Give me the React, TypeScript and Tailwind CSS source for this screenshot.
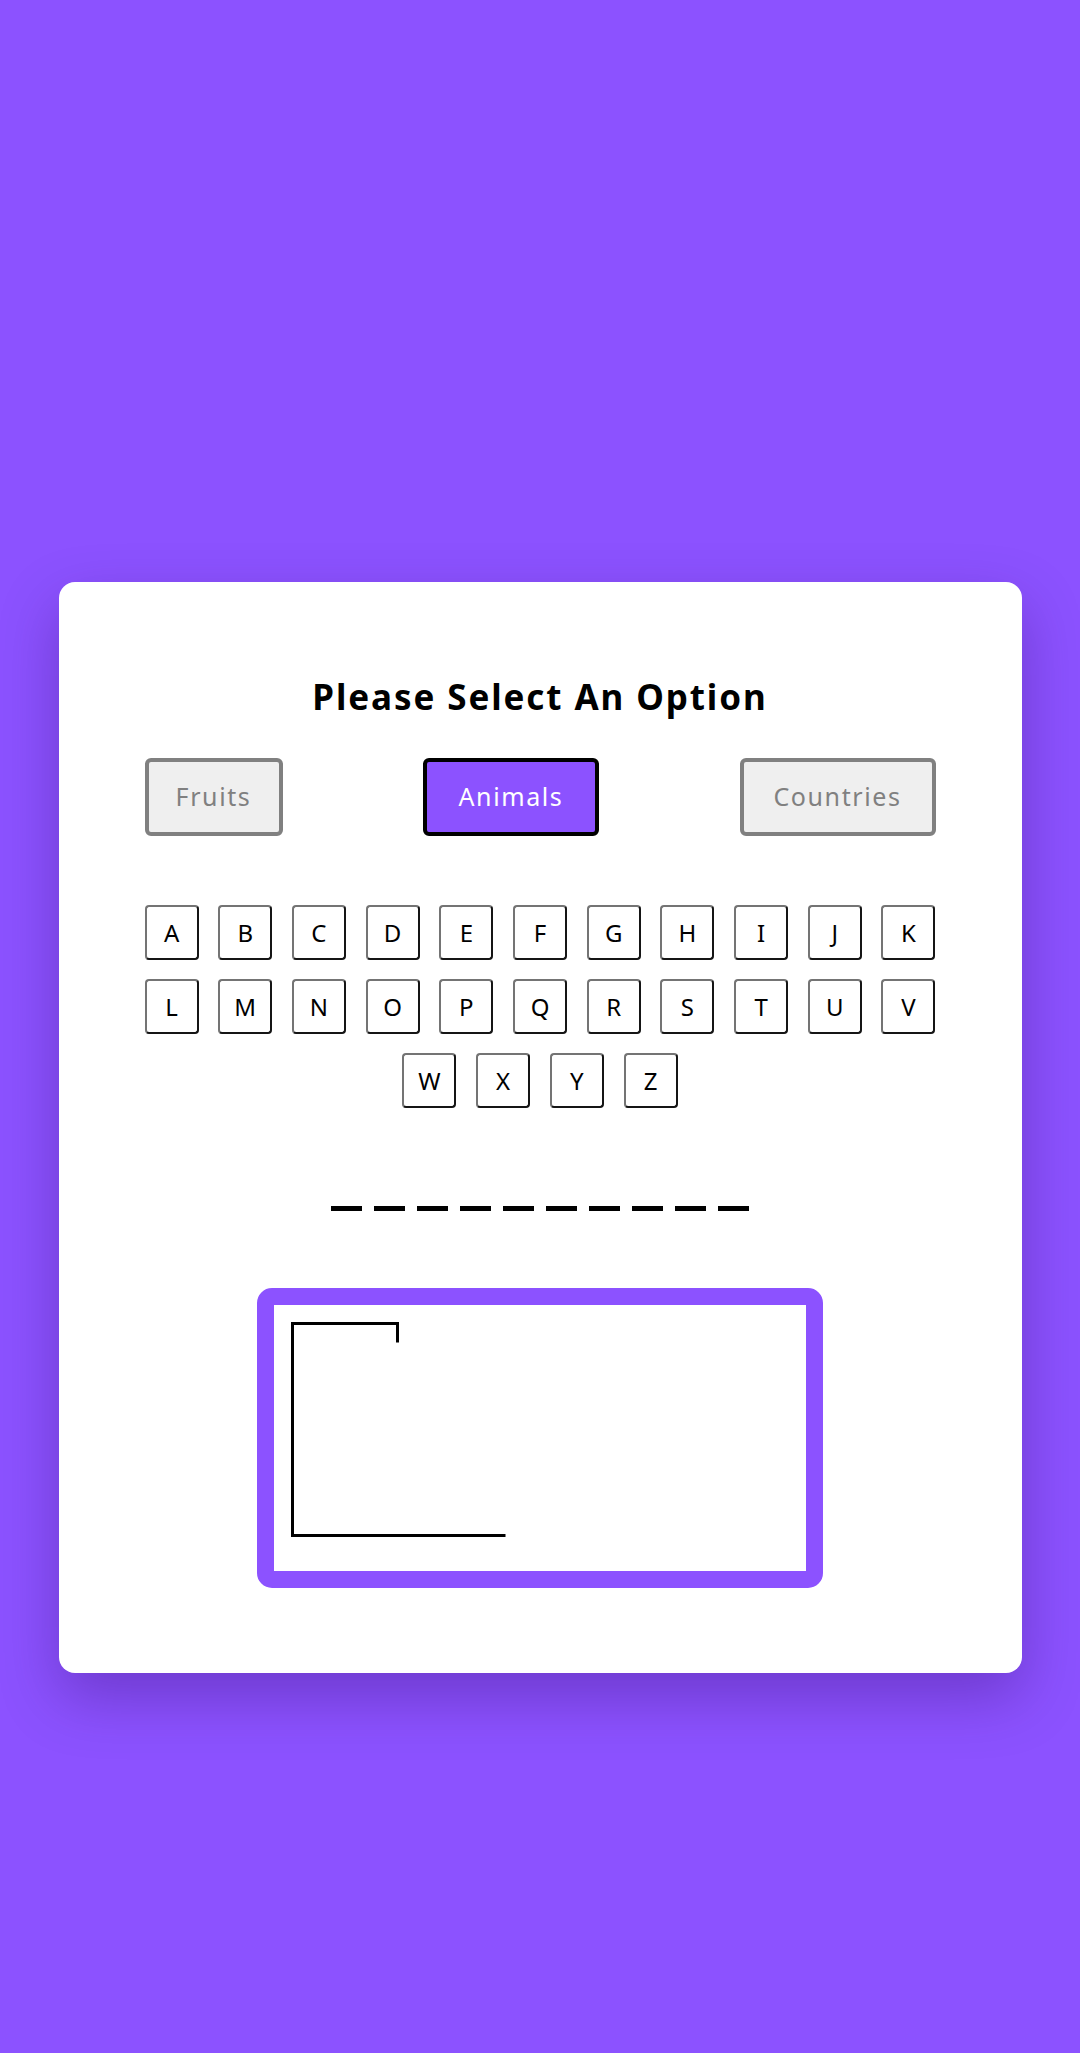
const CATEGORIES = [
  { label: 'Fruits', width: 'w-[138px]', active: false },
  { label: 'Animals', width: 'w-[176px]', active: true },
  { label: 'Countries', width: 'w-[196px]', active: false },
];

const LETTERS = 'ABCDEFGHIJKLMNOPQRSTUVWXYZ'.split('');

const WORD_LENGTH = 10;

function Gallows() {
  return (
    <svg width="532" height="266" viewBox="0 0 532 266" className="block">
      <g stroke="#000" strokeWidth="3" fill="none" strokeLinecap="square">
        <path d="M18.5 230.5 V18.5 H123.5 V36" />
        <path d="M18.5 230.5 H230" />
      </g>
    </svg>
  );
}

export default function App() {
  return (
    <div
      className="min-h-screen bg-[#8c52ff] pt-[582px] pb-[380px]"
      style={{ fontFamily: '"Noto Sans", "Open Sans", sans-serif' }}
    >
      <div className="mx-auto w-[963px] rounded-2xl bg-white px-[86px] pt-[89px] pb-[85px] shadow-[0_24px_60px_rgba(40,0,90,0.3)]">
        <h1 className="text-center text-[35px] font-bold leading-[52px] tracking-[1.9px] text-black">
          Please Select An Option
        </h1>

        {/* categories */}
        <div className="mt-[35px] flex justify-between">
          {CATEGORIES.map((c) => (
            <button
              key={c.label}
              className={
                c.active
                  ? `${c.width} h-[78px] rounded-[6px] border-4 border-black bg-[#8c52ff] text-[25px] tracking-[1.6px] text-white`
                  : `${c.width} h-[78px] rounded-[6px] border-4 border-[#808080] bg-[#efefef] text-[25px] tracking-[1.6px] text-[#808080]`
              }
            >
              {c.label}
            </button>
          ))}
        </div>

        {/* keyboard */}
        <div className="mt-[69px] flex flex-wrap justify-center gap-x-[19.7px] gap-y-[19px]">
          {LETTERS.map((l) => (
            <button
              key={l}
              className="flex h-[55px] w-[54px] items-center justify-center rounded-[4px] border-[2.5px] border-t-[#747474] border-l-[#747474] border-r-[#151515] border-b-[#151515] bg-white text-[24px] text-black"
            >
              {l}
            </button>
          ))}
        </div>

        {/* hidden word */}
        <div className="mt-[98px] flex justify-center gap-[12px]">
          {Array.from({ length: WORD_LENGTH }).map((_, i) => (
            <div key={i} className="h-[5px] w-[31px] bg-black" />
          ))}
        </div>

        {/* canvas */}
        <div className="mt-[77px] flex justify-center">
          <div className="rounded-[15px] border-[17px] border-[#8c52ff] bg-white">
            <Gallows />
          </div>
        </div>
      </div>
    </div>
  );
}
